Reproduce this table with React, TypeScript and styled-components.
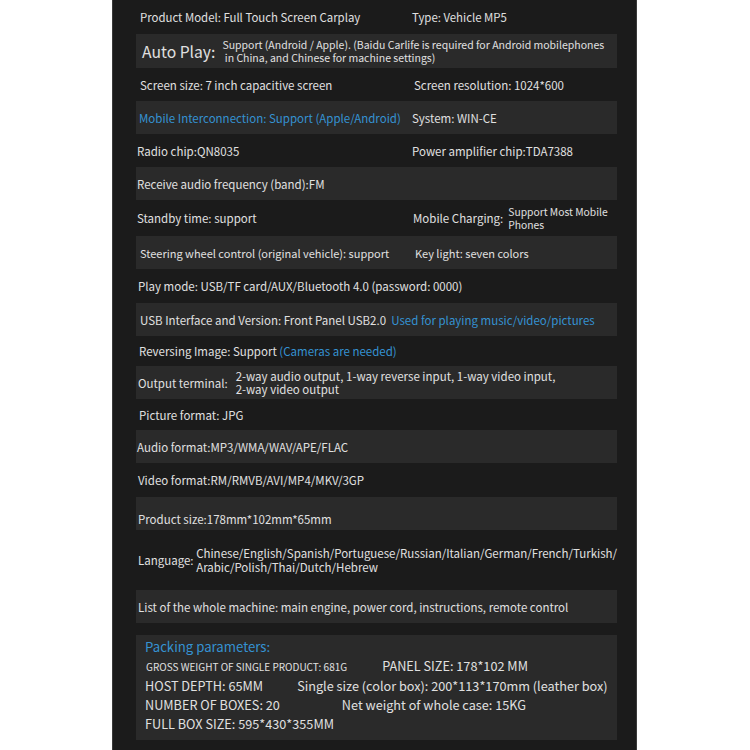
import styled, { createGlobalStyle } from "styled-components";

const GlobalStyle = createGlobalStyle`
  body {
    margin: 0;
    background: #ffffff;
  }
`;

type Tone = "dark" | "light";

const Panel = styled.div`
  box-sizing: border-box;
  width: 525px;
  min-height: 750px;
  margin-left: 112px;
  padding: 0 19px 10px 23px;
  background: #1b1b1b;
  border-left: 1px solid #3a3a3a;
  border-right: 1px solid #3a3a3a;
  font-family: "Noto Sans CJK SC", "Noto Sans", sans-serif;
  color: #e0e0e0;
  font-size: 11.5px;
  display: flex;
  flex-direction: column;
`;

const Row = styled.div<{ $tone: Tone; $h: number; $end?: boolean; $fs?: number }>`
  display: flex;
  align-items: ${({ $end }) => ($end ? "flex-end" : "center")};
  height: ${({ $h }) => $h}px;
  padding: ${({ $end }) => ($end ? "0 0 3px" : "0")};
  box-sizing: border-box;
  font-size: ${({ $fs }) => $fs ?? 11.5}px;
  background: ${({ $tone }) => ($tone === "light" ? "#2a2a2a" : "transparent")};
  white-space: nowrap;
`;

const Cell = styled.div<{ $pad?: number }>`
  width: 276px;
  flex-shrink: 0;
  padding-left: ${({ $pad }) => $pad ?? 3}px;
  box-sizing: border-box;
  display: flex;
  align-items: center;
`;

const Text = styled.span<{ $pad?: number }>`
  padding-left: ${({ $pad }) => $pad ?? 0}px;
`;

const Blue = styled.span`
  color: #3592d2;
`;

const BigLabel = styled.span`
  font-size: 15.7px;
  padding: 0 7px 0 6px;
`;

const Small = styled.div<{ $fs?: number }>`
  font-size: ${({ $fs }) => $fs ?? 10.5}px;
  line-height: 13px;
`;

const Label = styled.span<{ $gap?: number }>`
  margin-right: ${({ $gap }) => $gap ?? 6}px;
`;

const Multi = styled.div<{ $lh?: number }>`
  line-height: ${({ $lh }) => $lh ?? 13.5}px;
`;

const Packing = styled.div`
  margin-top: 12px;
  height: 105px;
  box-sizing: border-box;
  background: #2a2a2a;
  padding: 2px 0 0 9px;
  display: flex;
  flex-direction: column;
  white-space: nowrap;
`;

const PackTitle = styled.div`
  color: #3592d2;
  font-size: 13.2px;
  line-height: 19px;
`;

const PackLine = styled.div<{ $gap: number }>`
  display: flex;
  align-items: baseline;
  gap: ${({ $gap }) => $gap}px;
  font-size: 12.7px;
  line-height: 19px;
`;

const Caps = styled.span`
  font-size: 10px;
  padding-left: 1px;
`;

export default function App() {
  return (
    <>
      <GlobalStyle />
      <Panel>
        <Row $tone="dark" $h={34} $fs={11.4}>
          <Cell $pad={4}>Product Model: Full Touch Screen Carplay</Cell>
          <Text>Type: Vehicle MP5</Text>
        </Row>
        <Row $tone="light" $h={34}>
          <BigLabel>Auto Play:</BigLabel>
          <Small>
            Support (Android / Apple). (Baidu Carlife is required for Android mobilephones
            <br />
            &nbsp;in China, and Chinese for machine settings)
          </Small>
        </Row>
        <Row $tone="dark" $h={33}>
          <Cell $pad={4}>Screen size: 7 inch capacitive screen</Cell>
          <Text $pad={2}>Screen resolution: 1024*600</Text>
        </Row>
        <Row $tone="light" $h={33}>
          <Cell $pad={3}>
            <Blue>Mobile Interconnection: Support (Apple/Android)</Blue>
          </Cell>
          <Text>System: WIN-CE</Text>
        </Row>
        <Row $tone="dark" $h={33}>
          <Cell $pad={1}>Radio chip:QN8035</Cell>
          <Text>Power amplifier chip:TDA7388</Text>
        </Row>
        <Row $tone="light" $h={33}>
          <Cell $pad={1}>Receive audio frequency (band):FM</Cell>
        </Row>
        <Row $tone="dark" $h={36}>
          <Cell $pad={1}>Standby time: support</Cell>
          <Text $pad={1}>
            <Label $gap={5}>Mobile Charging:</Label>
          </Text>
          <Small $fs={10.3}>
            Support Most Mobile
            <br />
            Phones
          </Small>
        </Row>
        <Row $tone="light" $h={33} $fs={11}>
          <Cell $pad={4}>Steering wheel control (original vehicle): support</Cell>
          <Text $pad={3}>Key light: seven colors</Text>
        </Row>
        <Row $tone="dark" $h={34}>
          <Cell $pad={2}>Play mode: USB/TF card/AUX/Bluetooth 4.0 (password: 0000)</Cell>
        </Row>
        <Row $tone="light" $h={33}>
          <Text $pad={4}>
            USB Interface and Version: Front Panel USB2.0&nbsp;{" "}
            <Blue>Used for playing music/video/pictures</Blue>
          </Text>
        </Row>
        <Row $tone="dark" $h={30}>
          <Text $pad={3}>
            Reversing Image: Support <Blue>(Cameras are needed)</Blue>
          </Text>
        </Row>
        <Row $tone="light" $h={33}>
          <Text $pad={2}>
            <Label $gap={8}>Output terminal:</Label>
          </Text>
          <Multi $lh={13}>
            2-way audio output, 1-way reverse input, 1-way video input,
            <br />
            2-way video output
          </Multi>
        </Row>
        <Row $tone="dark" $h={31}>
          <Text $pad={3}>Picture format: JPG</Text>
        </Row>
        <Row $tone="light" $h={33}>
          <Text $pad={1}>Audio format:MP3/WMA/WAV/APE/FLAC</Text>
        </Row>
        <Row $tone="dark" $h={34}>
          <Text $pad={2}>Video format:RM/RMVB/AVI/MP4/MKV/3GP</Text>
        </Row>
        <Row $tone="light" $h={33} $end>
          <Text $pad={2}>Product size:178mm*102mm*65mm</Text>
        </Row>
        <Row $tone="dark" $h={60}>
          <Text $pad={2}>Language:&nbsp;</Text>
          <Multi $lh={14}>
            Chinese/English/Spanish/Portuguese/Russian/Italian/German/French/Turkish/
            <br />
            Arabic/Polish/Thai/Dutch/Hebrew
          </Multi>
        </Row>
        <Row $tone="light" $h={33}>
          <Text $pad={2}>
            List of the whole machine: main engine, power cord, instructions, remote control
          </Text>
        </Row>
        <Packing>
          <PackTitle>Packing parameters:</PackTitle>
          <PackLine $gap={35}>
            <Caps>GROSS WEIGHT OF SINGLE PRODUCT: 681G</Caps>
            <span>PANEL SIZE: 178*102 MM</span>
          </PackLine>
          <PackLine $gap={34}>
            <span>HOST DEPTH: 65MM</span>
            <span>Single size (color box): 200*113*170mm (leather box)</span>
          </PackLine>
          <PackLine $gap={62}>
            <span>NUMBER OF BOXES: 20</span>
            <span>Net weight of whole case: 15KG</span>
          </PackLine>
          <PackLine $gap={0}>
            <span>FULL BOX SIZE: 595*430*355MM</span>
          </PackLine>
        </Packing>
      </Panel>
    </>
  );
}
